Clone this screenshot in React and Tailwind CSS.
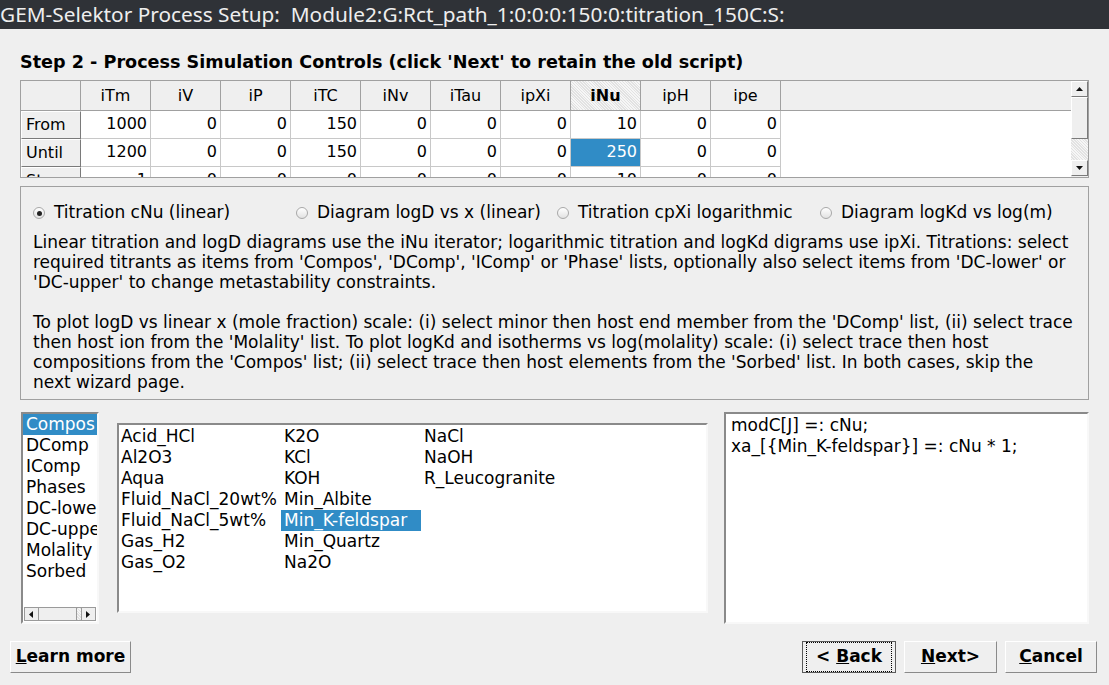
import React from 'react';

const columns = ['iTm', 'iV', 'iP', 'iTC', 'iNv', 'iTau', 'ipXi', 'iNu', 'ipH', 'ipe'];
const rows = [
  { label: 'From', values: ['1000', '0', '0', '150', '0', '0', '0', '10', '0', '0'] },
  { label: 'Until', values: ['1200', '0', '0', '150', '0', '0', '0', '250', '0', '0'] },
  { label: 'Step', values: ['1', '0', '0', '0', '0', '0', '0', '10', '0', '0'] },
];

const categories = ['Compos', 'DComp', 'IComp', 'Phases', 'DC-lower', 'DC-upper', 'Molality', 'Sorbed'];
const items = [
  ['Acid_HCl', 'Al2O3', 'Aqua', 'Fluid_NaCl_20wt%', 'Fluid_NaCl_5wt%', 'Gas_H2', 'Gas_O2'],
  ['K2O', 'KCl', 'KOH', 'Min_Albite', 'Min_K-feldspar', 'Min_Quartz', 'Na2O'],
  ['NaCl', 'NaOH', 'R_Leucogranite'],
];

const hatch = 'bg-[repeating-linear-gradient(45deg,#e2e2e2_0px,#e2e2e2_1px,#f6f6f6_1px,#f6f6f6_2px)]';
const raised = 'bg-[#efefef] border border-t-white border-l-white border-b-[#7a7a7a] border-r-[#7a7a7a]';
const sunken = 'bg-white border-2 border-t-[#8a8a8a] border-l-[#8a8a8a] border-b-[#f8f8f8] border-r-[#f8f8f8]';

function Arrow({ dir }) {
  const pts = {
    up: '1,6 4.5,2 8,6',
    down: '1,2 4.5,6 8,2',
    left: '6,1 2,4.5 6,8',
    right: '2,1 6,4.5 2,8',
  }[dir];
  return (
    <svg width="9" height="8" viewBox="0 0 9 8">
      <polygon points={pts} fill="#111" />
    </svg>
  );
}

function Radio({ checked, label }) {
  return (
    <div className="flex items-center gap-[9px]">
      <span className="w-[12px] h-[12px] rounded-full border border-[#a8a8a8] bg-gradient-to-b from-[#ffffff] to-[#e2e2e2] flex items-center justify-center">
        {checked && <span className="w-[5px] h-[5px] rounded-full bg-[#222]" />}
      </span>
      <span>{label}</span>
    </div>
  );
}

function Btn({ children, focus, className = '' }) {
  return (
    <div className={`h-[32px] flex items-center justify-center bg-[#efefef] font-bold text-[17px] border ${focus ? 'border-[#5a5a5a]' : 'border-t-white border-l-white border-b-[#8a8a8a] border-r-[#8a8a8a]'} ${className}`}>
      {focus ? (
        <div className="w-full h-full border border-dotted border-black m-[3px] flex items-center justify-center">{children}</div>
      ) : children}
    </div>
  );
}

export default function App() {
  return (
    <div className="w-[1109px] h-[685px] bg-[#efefef] overflow-hidden flex flex-col font-['DejaVu_Sans',sans-serif] text-black">
      {/* window title */}
      <div className="h-[29px] shrink-0 bg-[#2f3237] text-[#eeeeee] text-[20.8px] font-['Noto_Sans',sans-serif] flex items-center whitespace-nowrap">
        GEM-Selektor Process Setup:&nbsp; Module2:G:Rct_path_1:0:0:0:150:0:titration_150C:S:
      </div>

      <div className="px-[20px] flex flex-col">
        <h1 className="mt-[23px] h-[20px] text-[17.6px] font-bold leading-[20px] whitespace-nowrap">
          Step 2 - Process Simulation Controls (click 'Next' to retain the old script)
        </h1>

        {/* iterator table */}
        <div className="mt-[8px] h-[98px] border border-[#a0a0a0] flex overflow-hidden">
          <div className="flex-1 flex flex-col text-[16px]">
            <div className="h-[30px] flex shrink-0 bg-[#efefef] border-b border-[#a0a0a0]">
              <div className="w-[60px] border-r border-[#a0a0a0]" />
              {columns.map((c) => (
                <div
                  key={c}
                  className={`w-[70px] flex items-center justify-center border-r border-[#a0a0a0] ${c === 'iNu' ? `font-bold ${hatch}` : ''}`}
                >
                  {c}
                </div>
              ))}
            </div>
            <div className="flex-1 bg-white">
              {rows.map((r) => (
                <div key={r.label} className="h-[28px] flex">
                  <div className={`w-[60px] ${raised} flex items-center pl-[4px]`}>
                    {r.label}
                  </div>
                  {r.values.map((v, i) => {
                    const sel = r.label === 'Until' && i === 7;
                    return (
                      <div
                        key={i}
                        className={`w-[70px] flex items-start justify-end pr-[3px] pt-[1px] border-r border-b border-[#c8c8c8] ${sel ? 'bg-[#308cc6] text-white' : ''}`}
                      >
                        {v}
                      </div>
                    );
                  })}
                </div>
              ))}
            </div>
          </div>
          {/* vertical scrollbar */}
          <div className="w-[17px] flex flex-col bg-[#efefef] pb-[1px]">
            <div className={`h-[16px] ${raised} flex items-center justify-center`}><Arrow dir="up" /></div>
            <div className={`h-[42px] ${raised}`} />
            <div className={`flex-1 ${hatch}`} />
            <div className={`h-[16px] ${raised} flex items-center justify-center`}><Arrow dir="down" /></div>
          </div>
        </div>

        {/* mode group */}
        <div className="mt-[8px] h-[214px] border border-[#a0a0a0] px-[12px] pt-[16px] text-[17px]">
          <div className="flex h-[20px] items-center whitespace-nowrap">
            <div className="w-[263px]"><Radio checked label="Titration cNu (linear)" /></div>
            <div className="w-[261px]"><Radio label="Diagram logD vs x (linear)" /></div>
            <div className="w-[263px]"><Radio label="Titration cpXi logarithmic" /></div>
            <Radio label="Diagram logKd vs log(m)" />
          </div>
          <div className="mt-[9px] leading-[20px] whitespace-nowrap">
            <p>
              Linear titration and logD diagrams use the iNu iterator; logarithmic titration and logKd digrams use ipXi. Titrations: select
              <br />
              required titrants as items from 'Compos', 'DComp', 'IComp' or 'Phase' lists, optionally also select items from 'DC-lower' or
              <br />
              'DC-upper' to change metastability constraints.
            </p>
            <p className="mt-[20px]">
              To plot logD vs linear x (mole fraction) scale: (i) select minor then host end member from the 'DComp' list, (ii) select trace
              <br />
              then host ion from the 'Molality' list. To plot logKd and isotherms vs log(molality) scale: (i) select trace then host
              <br />
              compositions from the 'Compos' list; (ii) select trace then host elements from the 'Sorbed' list. In both cases, skip the
              <br />
              next wizard page.
            </p>
          </div>
        </div>

        {/* lists */}
        <div className="mt-[12px] h-[212px] flex text-[17px]">
          <div className={`ml-[1px] w-[78px] ${sunken} flex flex-col overflow-hidden`}>
            <div className="flex-1">
              {categories.map((c, i) => (
                <div key={c} className={`h-[21px] leading-[21px] pl-[3px] whitespace-nowrap ${i === 0 ? 'bg-[#308cc6] text-white' : ''}`}>
                  {c}
                </div>
              ))}
            </div>
            <div className="h-[14px] mx-[1px] mb-[1px] flex border border-[#9a9a9a] bg-[#efefef]">
              <div className="w-[14px] border-r border-[#9a9a9a] flex items-center justify-center"><Arrow dir="left" /></div>
              <div className="w-[38px] bg-[#efefef] border-r border-[#9a9a9a]" />
              <div className={`flex-1 ${hatch}`} />
              <div className="w-[14px] border-l border-[#9a9a9a] flex items-center justify-center"><Arrow dir="right" /></div>
            </div>
          </div>

          <div className={`ml-[18px] my-[11px] w-[591px] ${sunken} flex pt-[1px]`}>
            {items.map((col, ci) => (
              <div key={ci} className={ci === 0 ? 'w-[162px] pl-[2px]' : ci === 1 ? 'w-[140px]' : 'flex-1'}>
                {col.map((it) => (
                  <div
                    key={it}
                    className={`h-[21px] leading-[21px] whitespace-nowrap ${ci > 0 ? 'pl-[3px]' : ''} ${it === 'Min_K-feldspar' ? 'bg-[#308cc6] text-white' : ''}`}
                  >
                    {it}
                  </div>
                ))}
              </div>
            ))}
          </div>

          <div className={`ml-[16px] flex-1 ${sunken} px-[5px] pt-[1px] leading-[21px]`}>
            <div>modC[J] =: cNu;</div>
            <div>xa_[{'{'}Min_K-feldspar{'}'}] =: cNu * 1;</div>
          </div>
        </div>
      </div>

      {/* buttons */}
      <div className="mt-[17px] px-[10px] flex items-center">
        <Btn className="w-[121px]"><span><u>L</u>earn more</span></Btn>
        <div className="flex-1" />
        <Btn focus className="w-[94px]"><span>&lt; <u>B</u>ack</span></Btn>
        <Btn className="ml-[8px] w-[93px]"><span><u>N</u>ext&gt;</span></Btn>
        <Btn className="ml-[8px] w-[92px] mr-[2px]"><span><u>C</u>ancel</span></Btn>
      </div>
    </div>
  );
}
